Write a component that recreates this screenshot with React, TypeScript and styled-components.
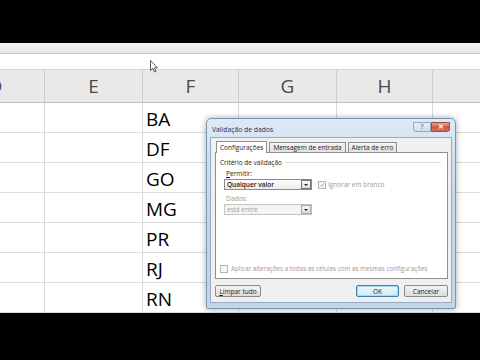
import React from 'react';
import styled, { createGlobalStyle } from 'styled-components';

const GlobalStyle = createGlobalStyle`
  html, body {
    margin: 0;
    padding: 0;
    background: #000;
  }
`;

const columns = [
  { label: 'D', width: 98 },
  { label: 'E', width: 98 },
  { label: 'F', width: 96 },
  { label: 'G', width: 98 },
  { label: 'H', width: 96 },
  { label: 'I', width: 98 },
];

const states = ['BA', 'DF', 'GO', 'MG', 'PR', 'RJ', 'RN'];

const StyledPage = styled.div`
  position: relative;
  width: 480px;
  height: 360px;
  overflow: hidden;
  background: #000;
  display: flex;
  flex-direction: column;
  font-family: 'Open Sans', 'Noto Sans', sans-serif;
`;

const StyledTopBlack = styled.div`
  height: 43px;
  flex-shrink: 0;
  background: #000;
`;

const StyledRibbonEdge = styled.div`
  height: 10px;
  flex-shrink: 0;
  background: linear-gradient(#f4f4f4, #e4e4e4);
  border-bottom: 1px solid #c9c9c9;
`;

const StyledFormulaBar = styled.div`
  height: 15px;
  flex-shrink: 0;
  background: #fff;
  border-bottom: 1px solid #d6d6d6;
`;

const StyledSheet = styled.div`
  overflow: hidden;
  flex-shrink: 0;
  background: #fff;
`;

const StyledGridRow = styled.div<{ $header?: boolean }>`
  display: flex;
  margin-left: -53px;
  height: ${({ $header }) => ($header ? '32px' : '29px')};
  background: ${({ $header }) => ($header ? '#e9e9e9' : '#fff')};
  border-bottom: 1px solid ${({ $header }) => ($header ? '#bdbdbd' : '#dcdcdc')};
`;

const StyledHeaderCell = styled.div`
  flex-shrink: 0;
  box-sizing: border-box;
  display: flex;
  align-items: center;
  justify-content: center;
  border-right: 1px solid #cdcdcd;
  font-size: 19px;
  color: #4a4a4a;
`;

const StyledCell = styled.div`
  flex-shrink: 0;
  box-sizing: border-box;
  display: flex;
  align-items: flex-end;
  padding: 0 0 0 3px;
  border-right: 1px solid #d8d8d8;
  font-size: 19px;
  line-height: 26px;
  color: #000;
`;

const StyledBottomBlack = styled.div`
  flex: 1;
  background: #000;
`;

const StyledCursor = styled.svg`
  position: absolute;
  left: 150px;
  top: 60px;
`;

/* dialog */

const StyledDialog = styled.div`
  position: absolute;
  left: 206px;
  top: 118px;
  width: 250px;
  height: 191px;
  box-sizing: border-box;
  border: 1px solid #7d96b4;
  border-radius: 5px 5px 2px 2px;
  background: linear-gradient(#dde9f5, #c6d8eb 40%, #c2d5e9);
  box-shadow: 0 0 6px rgba(0, 0, 0, 0.35);
  padding: 0 3px 5px 3px;
  display: flex;
  flex-direction: column;
  font-size: 6.5px;
  color: #1c1c1c;
`;

const StyledTitleBar = styled.div`
  height: 18px;
  display: flex;
  align-items: flex-start;
`;

const StyledTitle = styled.div`
  padding: 6px 0 0 2px;
  font-size: 6.8px;
  color: #1e2f57;
`;

const StyledCaptionButtons = styled.div`
  margin: 3px 2px 0 auto;
  display: flex;
`;

const StyledCaptionButton = styled.div<{ $close?: boolean }>`
  width: ${({ $close }) => ($close ? '19px' : '18px')};
  height: 10px;
  box-sizing: border-box;
  border: 1px solid ${({ $close }) => ($close ? '#9a4a3e' : '#93a7c0')};
  border-radius: ${({ $close }) => ($close ? '0 0 3px 0' : '0 0 0 3px')};
  background: ${({ $close }) =>
    $close ? 'linear-gradient(#e8a08f, #cc5a44 55%, #d67258)' : 'linear-gradient(#e9eff7, #cfdbea)'};
  display: flex;
  align-items: center;
  justify-content: center;
  color: ${({ $close }) => ($close ? '#fff' : '#7d8da3')};
  font-size: 6.5px;
  font-weight: bold;
  line-height: 1;
`;

const StyledClient = styled.div`
  flex: 1;
  background: #f0f0f0;
  border: 1px solid #98abc4;
  padding: 3px 3px 4px 4px;
  display: flex;
  flex-direction: column;
`;

const StyledTabs = styled.div`
  display: flex;
  padding-left: 1px;
  gap: 2px;
  margin-bottom: -1px;
  position: relative;
  z-index: 1;
`;

const StyledTab = styled.div<{ $active?: boolean }>`
  height: ${({ $active }) => ($active ? '12px' : '11px')};
  margin-top: ${({ $active }) => ($active ? '0' : '1px')};
  box-sizing: border-box;
  padding: 0 3px;
  border: 1px solid #8e8f8f;
  border-bottom: ${({ $active }) => ($active ? 'none' : '1px solid #8e8f8f')};
  background: ${({ $active }) => ($active ? '#fff' : 'linear-gradient(#f4f4f4, #e2e2e2)')};
  display: flex;
  align-items: center;
  white-space: nowrap;
`;

const StyledPanel = styled.div`
  height: 127px;
  box-sizing: border-box;
  background: #fff;
  border: 1px solid #8e8f8f;
  padding: 4px 6px 5px 4px;
  display: flex;
  flex-direction: column;
`;

const StyledGroupHeader = styled.div`
  display: flex;
  align-items: center;
  gap: 3px;
  height: 10px;

  &::after {
    content: '';
    flex: 1;
    height: 1px;
    background: #dcdcdc;
  }
`;

const StyledGroupBody = styled.div`
  flex: 1;
  padding: 2px 0 0 6px;
  display: flex;
  flex-direction: column;
`;

const StyledLabel = styled.div<{ $disabled?: boolean }>`
  height: 9px;
  display: flex;
  align-items: center;
  color: ${({ $disabled }) => ($disabled ? '#9a9a9a' : '#1c1c1c')};
`;

const StyledUnder = styled.span`
  text-decoration: underline;
`;

const StyledFieldRow = styled.div`
  display: flex;
  align-items: center;
  gap: 6px;
  margin: 1px 0 4px -2px;
`;

const StyledSelect = styled.div<{ $disabled?: boolean }>`
  width: 88px;
  height: 11px;
  box-sizing: border-box;
  border: 1px solid ${({ $disabled }) => ($disabled ? '#c4c4c4' : '#8a8a8a')};
  background: ${({ $disabled }) => ($disabled ? '#f4f4f4' : 'linear-gradient(#fdfdfd, #ececec)')};
  display: flex;
  align-items: center;
  padding-left: 2px;
  font-weight: ${({ $disabled }) => ($disabled ? 'normal' : '600')};
  color: ${({ $disabled }) => ($disabled ? '#a0a0a0' : '#1a1a1a')};
`;

const StyledSelectText = styled.span`
  flex: 1;
`;

const StyledArrowButton = styled.div<{ $disabled?: boolean }>`
  width: 10px;
  height: 9px;
  box-sizing: border-box;
  border: 1px solid ${({ $disabled }) => ($disabled ? '#a8a8a8' : '#777')};
  background: linear-gradient(#fafafa, #dedede);
  display: flex;
  align-items: center;
  justify-content: center;

  &::after {
    content: '';
    border-left: 2px solid transparent;
    border-right: 2px solid transparent;
    border-top: 2px solid #222;
  }
`;

const StyledCheck = styled.div`
  display: flex;
  align-items: center;
  gap: 2px;
  color: #9a9a9a;
`;

const StyledCheckBox = styled.div`
  width: 6px;
  height: 6px;
  border: 1px solid #b4b4b4;
  background: #f6f6f6;
  display: flex;
  align-items: center;
  justify-content: center;
  font-size: 6px;
  line-height: 1;
  color: #9a9a9a;
`;

const StyledApplyRow = styled(StyledCheck)`
  margin-top: auto;
  gap: 3px;
  font-size: 6.3px;
`;

const StyledFooter = styled.div`
  display: flex;
  align-items: center;
  gap: 5px;
  margin-top: 6px;
`;

const StyledButton = styled.div<{ $default?: boolean; $width: number }>`
  width: ${({ $width }) => $width}px;
  height: 12px;
  box-sizing: border-box;
  border: 1px solid ${({ $default }) => ($default ? '#3c7fb1' : '#8a8a8a')};
  border-radius: 2px;
  background: ${({ $default }) => ($default ? 'linear-gradient(#edf6fc, #d4e8f6)' : 'linear-gradient(#f5f5f5, #dcdcdc)')};
  box-shadow: ${({ $default }) => ($default ? 'inset 0 0 0 1px #a8d8f5' : 'none')};
  display: flex;
  align-items: center;
  justify-content: center;
`;

const StyledSpacer = styled.div`
  flex: 1;
`;

export default function App() {
  return (
    <>
      <GlobalStyle />
      <StyledPage>
        <StyledTopBlack />
        <StyledRibbonEdge />
        <StyledFormulaBar />
        <StyledSheet>
          <StyledGridRow $header>
            {columns.map((c) => (
              <StyledHeaderCell key={c.label} style={{ width: c.width }}>
                {c.label}
              </StyledHeaderCell>
            ))}
          </StyledGridRow>
          {states.map((s) => (
            <StyledGridRow key={s}>
              {columns.map((c) => (
                <StyledCell key={c.label} style={{ width: c.width }}>
                  {c.label === 'F' ? s : ''}
                </StyledCell>
              ))}
            </StyledGridRow>
          ))}
        </StyledSheet>
        <StyledBottomBlack />

        <StyledCursor width="8" height="13" viewBox="0 0 8 13">
          <path d="M0.5 0.5 L0.5 10.5 L3 8.3 L4.6 12 L6 11.4 L4.5 7.8 L7.5 7.8 Z" fill="#fff" stroke="#333" strokeWidth="0.8" />
        </StyledCursor>

        <StyledDialog>
          <StyledTitleBar>
            <StyledTitle>Validação de dados</StyledTitle>
            <StyledCaptionButtons>
              <StyledCaptionButton>?</StyledCaptionButton>
              <StyledCaptionButton $close>✕</StyledCaptionButton>
            </StyledCaptionButtons>
          </StyledTitleBar>
          <StyledClient>
            <StyledTabs>
              <StyledTab $active>Configurações</StyledTab>
              <StyledTab>Mensagem de entrada</StyledTab>
              <StyledTab>Alerta de erro</StyledTab>
            </StyledTabs>
            <StyledPanel>
              <StyledGroupHeader>Critério de validação</StyledGroupHeader>
              <StyledGroupBody>
                <StyledLabel>
                  <span>
                    <StyledUnder>P</StyledUnder>ermitir:
                  </span>
                </StyledLabel>
                <StyledFieldRow>
                  <StyledSelect>
                    <StyledSelectText>Qualquer valor</StyledSelectText>
                    <StyledArrowButton />
                  </StyledSelect>
                  <StyledCheck>
                    <StyledCheckBox>✓</StyledCheckBox>
                    <span>Ignorar em branco</span>
                  </StyledCheck>
                </StyledFieldRow>
                <StyledLabel $disabled>Dados:</StyledLabel>
                <StyledFieldRow>
                  <StyledSelect $disabled>
                    <StyledSelectText>está entre</StyledSelectText>
                    <StyledArrowButton $disabled />
                  </StyledSelect>
                </StyledFieldRow>
              </StyledGroupBody>
              <StyledApplyRow>
                <StyledCheckBox />
                <span>Aplicar alterações a todas as células com as mesmas configurações</span>
              </StyledApplyRow>
            </StyledPanel>
            <StyledFooter>
              <StyledButton $width={46}>
                <span>
                  <StyledUnder>L</StyledUnder>impar tudo
                </span>
              </StyledButton>
              <StyledSpacer />
              <StyledButton $default $width={43}>OK</StyledButton>
              <StyledButton $width={44}>Cancelar</StyledButton>
            </StyledFooter>
          </StyledClient>
        </StyledDialog>
      </StyledPage>
    </>
  );
}
